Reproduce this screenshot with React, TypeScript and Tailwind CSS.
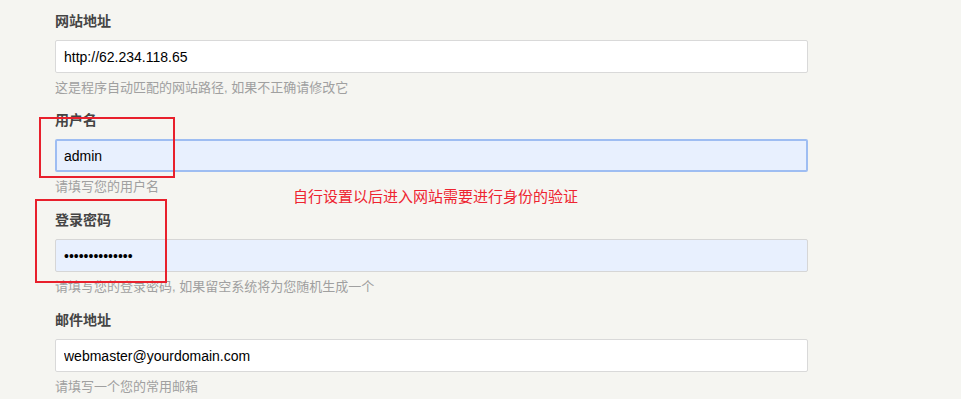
import React from "react";

const cjk = "font-['Liberation_Sans','Noto_Sans_CJK_SC',sans-serif]";

type Field = {
  label: string;
  value: string;
  hint: string;
  type?: string;
  variant?: "plain" | "focus" | "fill";
};

const fields: Field[] = [
  { label: "网站地址", value: "http://62.234.118.65", hint: "这是程序自动匹配的网站路径, 如果不正确请修改它" },
  { label: "用户名", value: "admin", hint: "请填写您的用户名", variant: "focus" },
  { label: "登录密码", value: "xxxxxxxxxxxxxx", hint: "请填写您的登录密码, 如果留空系统将为您随机生成一个", type: "password", variant: "fill" },
  { label: "邮件地址", value: "webmaster@yourdomain.com", hint: "请填写一个您的常用邮箱" },
];

function inputClass(variant?: Field["variant"]) {
  if (variant === "focus") return "border-2 border-[#9ebdf2] bg-[#e8f0fe] px-[7px]";
  if (variant === "fill") return "border border-[#d6d6d6] bg-[#e8f0fe] px-2";
  return "border border-[#d9d9d9] bg-white px-2";
}

export default function App() {
  return (
    <main className={`min-h-screen w-[961px] h-[399px] overflow-hidden bg-[#f5f5f1] ${cjk}`}>
      <div className="relative pl-[55px] pt-[11px]">
        {fields.map((f, i) => (
          <section key={f.label} className={i === 0 ? "mb-[14px]" : "mb-[15px]"}>
            <label className="block text-[14px] font-bold leading-5 text-[#444]">{f.label}</label>
            <input
              readOnly
              type={f.type ?? "text"}
              value={f.value}
              className={`mt-[9px] block h-[33px] w-[753px] rounded-[2px] text-[14px] text-black outline-none ${inputClass(f.variant)}`}
            />
            <p className="mt-[7px] text-[13px] leading-4 text-[#a0a0a0]">{f.hint}</p>
          </section>
        ))}

        {/* annotation overlay */}
        <p className="absolute left-[293px] top-[187px] text-[15px] leading-5 text-[#ee2430]">
          自行设置以后进入网站需要进行身份的验证
        </p>
        <div className="absolute left-[39px] top-[117px] h-[61px] w-[136px] border-2 border-[#e8202c]" />
        <div className="absolute left-[35px] top-[199px] h-[84px] w-[132px] border-2 border-[#e8202c]" />
      </div>
    </main>
  );
}
